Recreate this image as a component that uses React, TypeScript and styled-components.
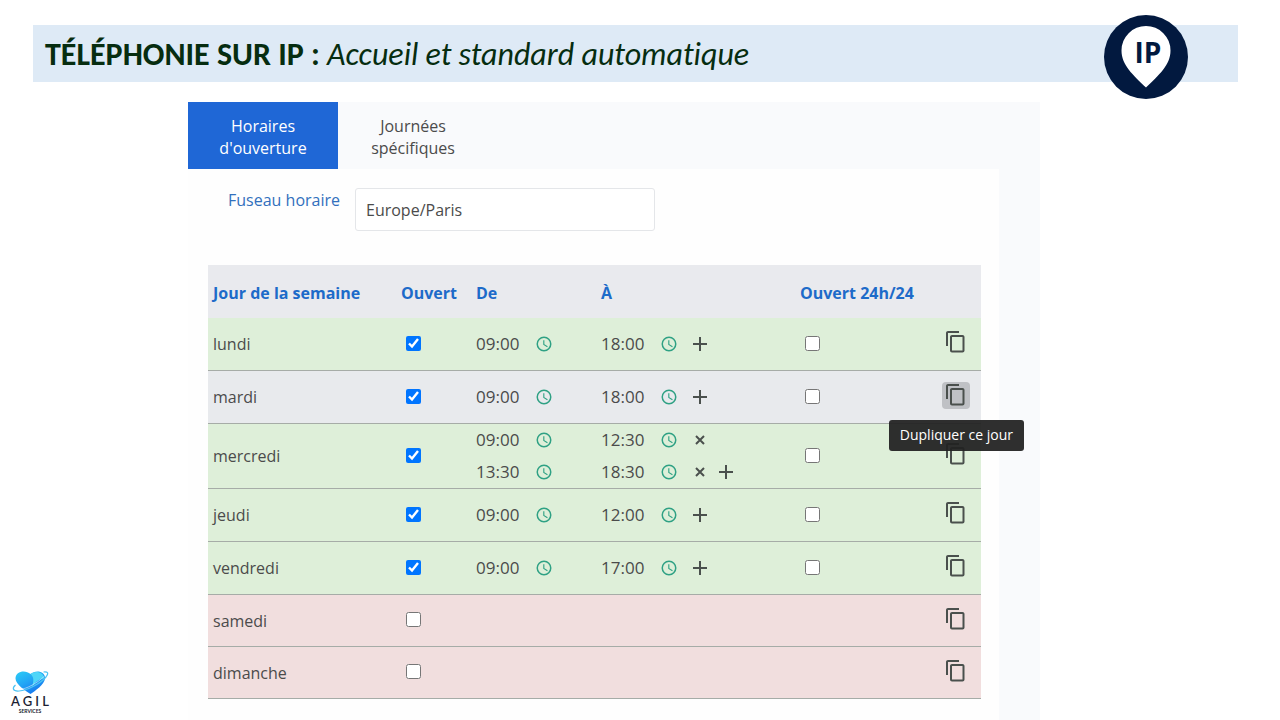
import React, { useState } from "react";
import styled, { createGlobalStyle, css } from "styled-components";

const GlobalStyle = createGlobalStyle`
  *, *::before, *::after { box-sizing: border-box; }
  body {
    margin: 0;
    background: #fff;
    color: #4b4b4b;
    font-family: "Open Sans", "Noto Sans", sans-serif;
    font-size: 16px;
    line-height: 22px;
  }
  button, input { font: inherit; color: inherit; }
`;

const Page = styled.div`
  min-height: 100vh;
  display: flex;
  flex-direction: column;
`;

const Banner = styled.header`
  position: relative;
  display: flex;
  align-items: center;
  height: 57px;
  margin: 25px 42px 20px 33px;
  padding: 2px 12px 0;
  background: #deeaf6;
`;

const Title = styled.h1`
  margin: 0;
  font-family: Calibri, Carlito, "Open Sans", sans-serif;
  font-size: 32px;
  line-height: 40px;
  font-weight: 700;
  font-variant-ligatures: none;
  color: #062d10;
  white-space: nowrap;

  em { font-weight: 400; }
`;

const PinBadge = styled.svg`
  position: absolute;
  top: -11px;
  right: 49px;
  width: 86px;
  height: 86px;
`;

const Columns = styled.div`
  flex: 1;
  display: grid;
  grid-template-columns: 188px minmax(0, 1fr) 240px;
`;

const Aside = styled.aside`
  display: flex;
  align-items: flex-end;
  padding: 0 0 6px 8px;
`;

const Brand = styled.div`
  width: 44px;
  display: flex;
  flex-direction: column;
  align-items: center;
  color: #1c1f33;
  font-family: Lato, sans-serif;
  white-space: nowrap;

  svg { width: 40px; height: 26px; }
`;

const BrandName = styled.span`
  font-size: 13px;
  line-height: 13px;
  font-weight: 600;
`;

const BrandSub = styled.span`
  font-size: 5px;
  line-height: 6px;
  font-weight: 700;
`;

const Panel = styled.main`
  display: flex;
  flex-direction: column;
  background: #f9fafc;
`;

const TabBar = styled.div`
  display: flex;
  height: 67px;
`;

const Tab = styled.button<{ $active: boolean }>`
  width: 150px;
  padding: 2px 24px 0;
  border: 0;
  background: ${(p) => (p.$active ? "#1f67d6" : "transparent")};
  color: ${(p) => (p.$active ? "#fff" : "#4b4b4b")};
  cursor: pointer;
`;

const Sheet = styled.section`
  flex: 1;
  margin-right: 41px;
  padding: 19px 18px 20px 20px;
  background: #fefefe;
`;

const ZoneRow = styled.div`
  display: flex;
  align-items: flex-start;
  margin-bottom: 34px;
`;

const ZoneLabel = styled.label`
  width: 132px;
  margin-right: 15px;
  padding-top: 1px;
  text-align: right;
  color: #3270bd;
`;

const ZoneInput = styled.input`
  width: 300px;
  height: 43px;
  padding: 0 10px;
  border: 1px solid #e4e6e9;
  border-radius: 3px;
  background: #fff;
  outline: none;
`;

const Schedule = styled.table`
  width: 100%;
  table-layout: fixed;
  border-collapse: separate;
  border-spacing: 0;
`;

const Head = styled.th`
  height: 53px;
  padding: 2px 0 0 5px;
  background: #e9eaee;
  color: #1d6bc9;
  font-weight: 700;
  text-align: left;
  white-space: nowrap;
`;

type Tone = "open" | "hover" | "closed";

const tones = { open: "#deefd9", hover: "#e8eaed", closed: "#f1dede" };

const Row = styled.tr<{ $tone: Tone }>`
  height: ${(p) => (p.$tone === "closed" ? 52 : 53)}px;
  background: ${(p) => tones[p.$tone]};
`;

const cell = css`
  padding: 0 0 0 5px;
  border-bottom: 1px solid #a6aca7;
  text-align: left;
  font-weight: 400;
`;

const Cell = styled.td`${cell}`;
const DayCell = styled.th`${cell}`;

const CheckCell = styled.td`
  ${cell}
  padding-bottom: 2px;
`;

const ActionCell = styled.td`
  ${cell}
  padding: 0 11px 4px 0;
`;

const Check = styled.input`
  display: block;
  width: 15px;
  height: 15px;
  margin: 0 0 0 5px;
`;

const Slot = styled.div`
  display: flex;
  align-items: center;
  height: 32px;

  &:first-child:last-child { height: 50px; }
`;

const TimeInput = styled.input`
  width: 59px;
  padding: 0;
  border: 0;
  background: transparent;
  font-size: 17px;
  outline: none;
`;

const IconButton = styled.button<{ $tint?: string }>`
  display: flex;
  align-items: center;
  justify-content: center;
  flex: none;
  width: 26px;
  height: 26px;
  padding: 0;
  border: 0;
  background: transparent;
  color: ${(p) => p.$tint || "#4a504d"};
  cursor: pointer;
`;

const ClockButton = styled(IconButton)`
  width: 18px;
  margin-right: 9px;
`;

const CopyHolder = styled.div`
  position: relative;
  display: flex;
  justify-content: flex-end;
`;

const CopyButton = styled(IconButton)<{ $hover: boolean }>`
  width: 28px;
  height: 27px;
  border-radius: 4px;
  background: ${(p) => (p.$hover ? "#bfc1c5" : "transparent")};
`;

const Tooltip = styled.span`
  position: absolute;
  z-index: 1;
  top: 38px;
  right: -54px;
  padding: 5px 11px 6px;
  border-radius: 3px;
  background: rgba(34, 34, 34, 0.94);
  color: #fff;
  font-size: 14px;
  line-height: 20px;
  white-space: nowrap;
`;

const ClockIcon = () => (
  <svg width="18" height="18" viewBox="0 0 24 24" fill="currentColor" aria-hidden="true">
    <path d="M12 2a10 10 0 1 0 0 20 10 10 0 0 0 0-20zm0 18a8 8 0 1 1 0-16 8 8 0 0 1 0 16z" />
    <path d="M12.5 7H11v6l5.2 3.2.8-1.3-4.5-2.7z" />
  </svg>
);

const PlusIcon = () => (
  <svg width="24" height="24" viewBox="0 0 24 24" fill="currentColor" aria-hidden="true">
    <path d="M19 13h-6v6h-2v-6H5v-2h6V5h2v6h6z" />
  </svg>
);

const CrossIcon = () => (
  <svg width="24" height="24" viewBox="0 0 24 24" fill="none" stroke="currentColor" strokeWidth="2" aria-hidden="true">
    <path d="M8 8l8 8M16 8l-8 8" />
  </svg>
);

const CopyIcon = () => (
  <svg width="24" height="24" viewBox="0 0 24 24" fill="currentColor" aria-hidden="true">
    <path d="M15 1H4c-1.100 0-2 .9-2 2v13h2V3h11V1zm3.500 4H8c-1.100 0-2 .9-2 2v13.500c0 1.100.9 2 2 2h10.500c1.100 0 2-.9 2-2V7c0-1.100-.9-2-2-2zm0 15.500H8V7h10.500v13.500z" />
  </svg>
);

const Heart = () => (
  <svg viewBox="0 0 40 26" aria-hidden="true">
    <defs>
      <linearGradient id="heart" x1="0" y1="0" x2="0.7" y2="1">
        <stop offset="0" stopColor="#2ccdf6" />
        <stop offset="0.5" stopColor="#22a5f5" />
        <stop offset="1" stopColor="#1573ee" />
      </linearGradient>
    </defs>
    <path d="M20.500 25C16 22 5.500 15.500 5.500 9.500C5.500 2 15.500 .5 20.500 5C25.500 .5 35.500 2 35 9.500C34.500 15.500 25 22 20.500 25z" fill="url(#heart)" />
    <path d="M20.500 5C25.500 1 34 3 34 9.500C29 10 25 13 22 18C24 12 24 8 20.500 5z" fill="#4fd6f8" />
    <path d="M5.500 16C2 19 2.500 22.500 9 22C18 21.500 31 14 36 8C39 4 38 2.500 33.500 3" fill="none" stroke="#4cc3f3" strokeWidth="1.200" />
    <path d="M8.500 20.800C17 20 28 13.500 34 7.500" fill="none" stroke="#fff" strokeWidth="0.500" />
  </svg>
);

type Day = {
  name: string;
  open: boolean;
  slots: [string, string][];
  hover?: boolean;
};

const week: Day[] = [
  { name: "lundi", open: true, slots: [["09:00", "18:00"]] },
  { name: "mardi", open: true, slots: [["09:00", "18:00"]], hover: true },
  { name: "mercredi", open: true, slots: [["09:00", "12:30"], ["13:30", "18:30"]] },
  { name: "jeudi", open: true, slots: [["09:00", "12:00"]] },
  { name: "vendredi", open: true, slots: [["09:00", "17:00"]] },
  { name: "samedi", open: false, slots: [] },
  { name: "dimanche", open: false, slots: [] },
];

function TimeField({ label, value }: { label: string; value: string }) {
  return (
    <>
      <TimeInput aria-label={label} defaultValue={value} />
      <ClockButton $tint="#2fa184" aria-label={`Choisir : ${label}`}>
        <ClockIcon />
      </ClockButton>
    </>
  );
}

function DayRow({ day }: { day: Day }) {
  const { name, slots, hover } = day;
  const tone: Tone = hover ? "hover" : day.open ? "open" : "closed";
  return (
    <Row $tone={tone}>
      <DayCell scope="row">{name}</DayCell>
      <CheckCell>
        <Check type="checkbox" defaultChecked={day.open} aria-label={`${name} ouvert`} />
      </CheckCell>
      <Cell>
        {slots.map(([from]) => (
          <Slot key={from}>
            <TimeField label={`${name}, de`} value={from} />
          </Slot>
        ))}
      </Cell>
      <Cell>
        {slots.map(([, to], i) => (
          <Slot key={to}>
            <TimeField label={`${name}, à`} value={to} />
            {slots.length > 1 && (
              <IconButton aria-label="Supprimer"><CrossIcon /></IconButton>
            )}
            {i === slots.length - 1 && (
              <IconButton aria-label="Ajouter"><PlusIcon /></IconButton>
            )}
          </Slot>
        ))}
      </Cell>
      <CheckCell>
        {day.open && <Check type="checkbox" aria-label={`${name} ouvert 24h/24`} />}
      </CheckCell>
      <ActionCell>
        <CopyHolder>
          <CopyButton $hover={!!hover} aria-label={`Dupliquer ${name}`}>
            <CopyIcon />
          </CopyButton>
          {hover && <Tooltip role="tooltip">Dupliquer ce jour</Tooltip>}
        </CopyHolder>
      </ActionCell>
    </Row>
  );
}

export default function App() {
  const [tab, setTab] = useState(0);
  return (
    <Page>
      <GlobalStyle />
      <Banner>
        <Title>
          TÉLÉPHONIE SUR IP : <em>Accueil et standard automatique</em>
        </Title>
        <PinBadge viewBox="0 0 86 86" role="img" aria-label="IP">
          <circle cx="43" cy="43" r="42" fill="#02193f" />
          <path d="M43 12a24.500 24.500 0 0 1 24.500 24.500C67.500 51 56 61 43 73.500C30 61 18.500 51 18.500 36.500A24.500 24.500 0 0 1 43 12z" fill="#fff" />
          <text x="45" y="49" textAnchor="middle" fill="#02193f" fontFamily="Open Sans, sans-serif" fontSize="28" fontWeight="700">IP</text>
        </PinBadge>
      </Banner>
      <Columns>
        <Aside>
          <Brand>
            <Heart />
            <BrandName>A G I L</BrandName>
            <BrandSub>SERVICES</BrandSub>
          </Brand>
        </Aside>
        <Panel>
          <TabBar role="tablist">
            {["Horaires d'ouverture", "Journées spécifiques"].map((text, i) => (
              <Tab key={text} role="tab" aria-selected={tab === i} $active={tab === i} onClick={() => setTab(i)}>
                {text}
              </Tab>
            ))}
          </TabBar>
          <Sheet>
            <ZoneRow>
              <ZoneLabel htmlFor="zone">Fuseau horaire</ZoneLabel>
              <ZoneInput id="zone" defaultValue="Europe/Paris" />
            </ZoneRow>
            <Schedule>
              <colgroup>
                <col style={{ width: 188 }} />
                <col style={{ width: 75 }} />
                <col style={{ width: 125 }} />
                <col style={{ width: 199 }} />
                <col />
                <col style={{ width: 48 }} />
              </colgroup>
              <thead>
                <tr>
                  <Head scope="col">Jour de la semaine</Head>
                  <Head scope="col">Ouvert</Head>
                  <Head scope="col">De</Head>
                  <Head scope="col">À</Head>
                  <Head scope="col">Ouvert 24h/24</Head>
                  <Head as="td" />
                </tr>
              </thead>
              <tbody>
                {week.map((day) => (
                  <DayRow key={day.name} day={day} />
                ))}
              </tbody>
            </Schedule>
          </Sheet>
        </Panel>
      </Columns>
    </Page>
  );
}
